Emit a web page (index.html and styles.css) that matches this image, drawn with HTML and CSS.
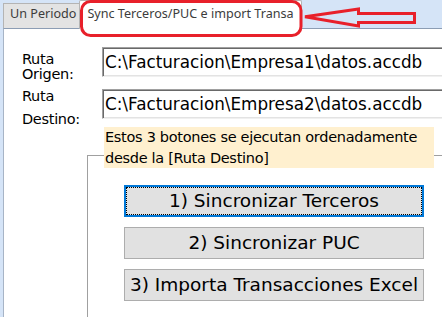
FILE: index.html
```html
<!DOCTYPE html>
<html lang="es">
<head>
<meta charset="utf-8">
<title>Sync Terceros/PUC</title>
<link rel="stylesheet" href="styles.css">
</head>
<body>
<div class="window">
  <div class="tabs">
    <div class="tab">Un Periodo</div>
    <div class="tab tab-active">Sync Terceros/PUC e import Transa</div>
  </div>
  <div class="panel">
    <div class="field">
      <div class="label label-origen">Ruta<br>Origen:</div>
      <div class="textbox">C:\Facturacion\Empresa1\datos.accdb</div>
    </div>
    <div class="field field-second">
      <div class="label label-destino">Ruta<br>Destino:</div>
      <div class="textbox">C:\Facturacion\Empresa2\datos.accdb</div>
    </div>
    <div class="note">Estos 3 botones se ejecutan ordenadamente<br>desde la [Ruta Destino]</div>
    <div class="group">
      <button class="btn btn-focus">1) Sincronizar Terceros</button>
      <button class="btn">2) Sincronizar PUC</button>
      <button class="btn">3) Importa Transacciones Excel</button>
    </div>
  </div>
  <svg class="annotation" width="442" height="40" viewBox="0 0 442 40">
    <rect x="81.5" y="1.5" width="219.5" height="34" rx="9" ry="9" fill="none" stroke="#e8202a" stroke-width="3"/>
    <polygon points="305,16.7 358.5,9 358.5,13.5 414.5,13.5 414.5,22.5 358.5,22.5 358.5,26 " fill="none" stroke="#e8202a" stroke-width="3" stroke-linejoin="miter"/>
  </svg>
</div>
</body>
</html>
```

FILE: styles.css
```css
html, body {
  margin: 0;
  padding: 0;
}

body {
  width: 442px;
  height: 317px;
  overflow: hidden;
  background: #d5e4f7;
}

.window {
  position: relative;
  width: 442px;
  height: 317px;
  overflow: hidden;
  display: flex;
  flex-direction: column;
  font-family: "DejaVu Sans", sans-serif;
}

.tabs {
  display: flex;
  align-items: flex-end;
  height: 28px;
  padding-left: 3px;
  flex: none;
}

.tab {
  box-sizing: border-box;
  height: 25px;
  border: 1px solid #b4b4b4;
  border-bottom: none;
  background: #e3e3e3;
  font-family: "Noto Sans", sans-serif;
  font-size: 12.6px;
  color: #3c3c3c;
  line-height: 20px;
  padding: 0 3px 0 6px;
  white-space: nowrap;
}

.tab-active {
  position: relative;
  z-index: 1;
  height: 29px;
  margin-bottom: -1px;
  margin-left: -1px;
  background: #ffffff;
  border-color: #b4b4b4;
  border-radius: 2px 2px 0 0;
  line-height: 26px;
  padding: 0 4px 0 7px;
  width: 223px;
}

.panel {
  flex: 1;
  margin-left: 3px;
  width: 480px;
  background: #ffffff;
  border-top: 1px solid #8c9db4;
  border-left: 1px solid #a7b4c6;
}

.field {
  display: flex;
  height: 30px;
  margin-top: 18px;
}

.field-second {
  margin-top: 12px;
}

.label {
  box-sizing: border-box;
  width: 98px;
  height: 30px;
  padding-left: 18px;
  font-size: 14.5px;
  letter-spacing: -0.3px;
  color: #000;
  flex: none;
}

.label-origen {
  line-height: 15px;
  padding-top: 5px;
}

.label-destino {
  line-height: 23px;
  margin-top: -4px;
}

.textbox {
  box-sizing: border-box;
  width: 360px;
  height: 30px;
  border-top: 1px solid #a0a0a0;
  border-left: 1px solid #a0a0a0;
  border-right: 1px solid #f0f0f0;
  border-bottom: 1px solid #f0f0f0;
  box-shadow: inset 1px 1px 0 #696969, inset -1px -1px 0 #e3e3e3;
  font-size: 16.8px;
  line-height: 28px;
  padding-left: 2px;
  color: #000;
  white-space: nowrap;
  flex: none;
}

.note {
  position: relative;
  z-index: 1;
  box-sizing: border-box;
  margin-top: 8px;
  margin-left: 100px;
  width: 330px;
  height: 41px;
  padding-left: 1px;
  background: #fff0cf;
  font-size: 14.5px;
  letter-spacing: -0.3px;
  line-height: 20.5px;
  color: #000;
}

.group {
  margin-top: -13px;
  margin-left: 83px;
  height: 200px;
  border-top: 1px solid #a0a0a0;
  border-left: 1px solid #a0a0a0;
  padding-top: 29px;
  padding-left: 36px;
  display: flex;
  flex-direction: column;
  gap: 10px;
}

.btn {
  box-sizing: border-box;
  width: 300px;
  height: 32px;
  margin: 0;
  padding: 0;
  border: 1px solid #adadad;
  background: #e1e1e1;
  font-family: "DejaVu Sans", sans-serif;
  font-size: 18.5px;
  line-height: 30px;
  color: #000;
  text-align: center;
  white-space: nowrap;
}

.btn-focus {
  border-color: #0078d7;
  box-shadow: inset 0 0 0 1px #0078d7;
  outline: 1px dotted #000;
  outline-offset: -3px;
}

.annotation {
  position: absolute;
  left: 0;
  top: 0;
  pointer-events: none;
  z-index: 2;
}
```
